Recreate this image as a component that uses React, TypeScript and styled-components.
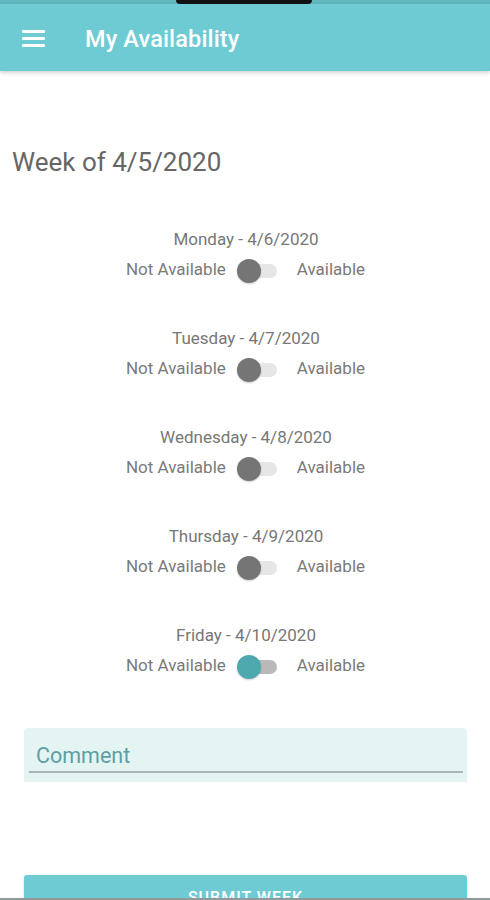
import styled, { createGlobalStyle } from 'styled-components';

const GlobalStyle = createGlobalStyle`
    html, body {
        margin: 0;
        padding: 0;
        background: #ffffff;
        font-family: Roboto, "Noto Sans", Arial, sans-serif;
    }
`;

const Screen = styled.div`
    width: 490px;
    height: 900px;
    overflow: hidden;
    display: flex;
    flex-direction: column;
    box-sizing: border-box;
    border-bottom: 2px solid #8f9a9b;
    background: #fff;
`;

const StatusStrip = styled.div`
    height: 4px;
    flex-shrink: 0;
    background: #62b8c0;
    display: flex;
    justify-content: center;
`;

const Notch = styled.div`
    width: 136px;
    height: 4px;
    margin-left: -2px;
    background: #111;
    border-radius: 0 0 6px 6px;
`;

const AppBar = styled.header`
    height: 67px;
    flex-shrink: 0;
    background: #6ecbd3;
    display: flex;
    align-items: center;
    padding: 0 22px;
    gap: 40px;
    box-shadow: 0 2px 4px rgba(0, 0, 0, 0.18);
    position: relative;
    z-index: 1;
`;

const MenuIcon = styled.div`
    width: 23px;
    display: flex;
    flex-direction: column;
    gap: 4px;
    margin-top: 2px;
    & > span {
        height: 3px;
        background: #fff;
        border-radius: 1px;
    }
`;

const Title = styled.h1`
    margin: 2px 0 0 0;
    color: #fff;
    font-size: 23.5px;
    font-weight: 500;
    letter-spacing: 0.15px;
`;

const Content = styled.main`
    flex-shrink: 0;
    display: flex;
    flex-direction: column;
    padding: 75px 0 0 0;
`;

const WeekHeading = styled.h2`
    margin: 0 0 51px 12px;
    font-size: 26px;
    line-height: 32px;
    font-weight: 400;
    color: #666;
`;

const DayList = styled.div`
    display: flex;
    flex-direction: column;
    gap: 39px;
`;

const DayBlock = styled.div`
    display: flex;
    flex-direction: column;
    align-items: center;
`;

const DayLabel = styled.div`
    font-size: 17px;
    line-height: 20px;
    color: #777;
    padding-left: 2px;
`;

const ToggleRow = styled.div`
    height: 40px;
    display: flex;
    align-items: center;
    justify-content: center;
    font-size: 17px;
    color: #7a7a7a;
    padding-left: 1px;
`;

const SwitchBox = styled.div`
    position: relative;
    width: 50px;
    height: 26px;
    margin: 4px 10px 0 11px;
`;

const Track = styled.div<{ $on: boolean }>`
    position: absolute;
    left: 8px;
    top: 6px;
    width: 32px;
    height: 14px;
    border-radius: 7px;
    background: ${p => (p.$on ? '#b9b9b9' : '#e6e6e6')};
`;

const Thumb = styled.div<{ $on: boolean }>`
    position: absolute;
    left: 0;
    top: 1px;
    width: 24px;
    height: 24px;
    border-radius: 50%;
    background: ${p => (p.$on ? '#4ea9ae' : '#757575')};
    box-shadow: 0 1px 2px rgba(0, 0, 0, 0.2);
`;

const CommentField = styled.div`
    margin: 43px 23px 0 24px;
    height: 54px;
    background: #e4f4f2;
    border-radius: 4px 4px 0 0;
    padding: 0 4px 0 5px;
    display: flex;
    flex-direction: column;
    justify-content: flex-end;
`;

const CommentLabel = styled.div`
    font-size: 21.5px;
    color: #5c9fa6;
    padding-left: 7px;
    padding-bottom: 3px;
`;

const Underline = styled.div`
    height: 2px;
    background: #a6b8b6;
    margin-bottom: 9px;
`;

const SubmitButton = styled.button`
    margin: 93px 23px 0 24px;
    height: 44px;
    flex-shrink: 0;
    border: none;
    border-radius: 3px;
    background: #6ecbd3;
    color: #fff;
    font-family: inherit;
    font-size: 16px;
    font-weight: 500;
    letter-spacing: 1px;
    text-transform: uppercase;
    box-shadow: 0 2px 3px rgba(0, 0, 0, 0.15);
`;

interface Day {
    name: string;
    date: string;
    on: boolean;
}

const days: Day[] = [
    { name: 'Monday', date: '4/6/2020', on: false },
    { name: 'Tuesday', date: '4/7/2020', on: false },
    { name: 'Wednesday', date: '4/8/2020', on: false },
    { name: 'Thursday', date: '4/9/2020', on: false },
    { name: 'Friday', date: '4/10/2020', on: true },
];

export default function App() {
    return (
        <>
            <GlobalStyle />
            <Screen>
                <StatusStrip>
                    <Notch />
                </StatusStrip>
                <AppBar>
                    <MenuIcon>
                        <span />
                        <span />
                        <span />
                    </MenuIcon>
                    <Title>My Availability</Title>
                </AppBar>
                <Content>
                    <WeekHeading>Week of 4/5/2020</WeekHeading>
                    <DayList>
                        {days.map(day => (
                            <DayBlock key={day.name}>
                                <DayLabel>
                                    {day.name} - {day.date}
                                </DayLabel>
                                <ToggleRow>
                                    Not Available
                                    <SwitchBox>
                                        <Track $on={day.on} />
                                        <Thumb $on={day.on} />
                                    </SwitchBox>
                                    Available
                                </ToggleRow>
                            </DayBlock>
                        ))}
                    </DayList>
                    <CommentField>
                        <CommentLabel>Comment</CommentLabel>
                        <Underline />
                    </CommentField>
                    <SubmitButton>Submit Week</SubmitButton>
                </Content>
            </Screen>
        </>
    );
}
